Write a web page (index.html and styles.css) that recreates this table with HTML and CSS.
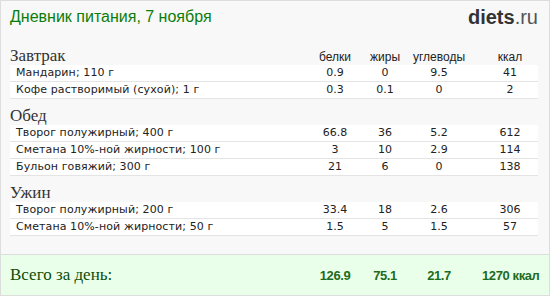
FILE: index.html
```html
<!DOCTYPE html>
<html lang="ru">
<head>
<meta charset="utf-8">
<title>Дневник питания</title>
<link rel="stylesheet" href="styles.css">
</head>
<body>
<div class="card">
  <header class="top">
    <h1 class="title">Дневник питания, 7 ноября</h1>
    <div class="logo"><b>diets</b>.ru</div>
  </header>
  <main class="diary">
    <div class="meal-head">
      <span class="meal">Завтрак</span>
      <span class="col">белки</span>
      <span class="col">жиры</span>
      <span class="col">углеводы</span>
      <span class="col kcal">ккал</span>
    </div>
    <div class="row"><span class="name">Мандарин; 110 г</span><span class="num">0.9</span><span class="num">0</span><span class="num">9.5</span><span class="num kcal">41</span></div>
    <div class="row"><span class="name">Кофе растворимый (сухой); 1 г</span><span class="num">0.3</span><span class="num">0.1</span><span class="num">0</span><span class="num kcal">2</span></div>

    <div class="meal-head"><span class="meal">Обед</span></div>
    <div class="row"><span class="name">Творог полужирный; 400 г</span><span class="num">66.8</span><span class="num">36</span><span class="num">5.2</span><span class="num kcal">612</span></div>
    <div class="row"><span class="name">Сметана 10%-ной жирности; 100 г</span><span class="num">3</span><span class="num">10</span><span class="num">2.9</span><span class="num kcal">114</span></div>
    <div class="row"><span class="name">Бульон говяжий; 300 г</span><span class="num">21</span><span class="num">6</span><span class="num">0</span><span class="num kcal">138</span></div>

    <div class="meal-head"><span class="meal">Ужин</span></div>
    <div class="row"><span class="name">Творог полужирный; 200 г</span><span class="num">33.4</span><span class="num">18</span><span class="num">2.6</span><span class="num kcal">306</span></div>
    <div class="row"><span class="name">Сметана 10%-ной жирности; 50 г</span><span class="num">1.5</span><span class="num">5</span><span class="num">1.5</span><span class="num kcal">57</span></div>
  </main>
  <footer class="total">
    <span class="total-label">Всего за день:</span>
    <span class="tnum">126.9</span>
    <span class="tnum">75.1</span>
    <span class="tnum">21.7</span>
    <span class="tnum kcal">1270 ккал</span>
  </footer>
</div>
</body>
</html>
```

FILE: styles.css
```css
* { box-sizing: border-box; }
html, body { margin: 0; padding: 0; background: #ffffff; }

.card {
  width: 550px;
  height: 296px;
  border: 1px solid #dddddd;
  background: #f8f8f8;
  display: flex;
  flex-direction: column;
  font-family: "DejaVu Sans", Verdana, sans-serif;
}

.top {
  height: 38px;
  padding: 5px 11px 0 9px;
  display: flex;
  justify-content: space-between;
  align-items: flex-start;
}

.title {
  margin: 0;
  font-family: "Liberation Sans", Arial, sans-serif;
  font-weight: normal;
  font-size: 16px;
  line-height: 22px;
  color: #0a7d0a;
}

.logo {
  font-family: "Liberation Sans", Arial, sans-serif;
  font-size: 20px;
  line-height: 22px;
  color: #555555;
}
.logo b { color: #333333; font-weight: bold; }

.diary {
  flex: 1;
  padding: 0 11px 0 9px;
}

.meal-head,
.row,
.total {
  display: grid;
  grid-template-columns: 1fr 50px 50px 58px 70px;
  align-items: center;
}

.meal-head {
  margin-top: 8px;
  height: 18px;
}

.meal {
  font-family: "Liberation Serif", "Times New Roman", serif;
  font-size: 17px;
  line-height: 18px;
  color: #333333;
}

.col {
  font-family: "Liberation Sans", Arial, sans-serif;
  font-size: 12px;
  color: #222222;
  text-align: center;
  align-self: end;
  line-height: 16px;
}

.kcal { padding-left: 14px; }

.row {
  height: 17px;
  background: #ffffff;
  border-bottom: 1px solid #e4e4e4;
  font-size: 11px;
  line-height: 16px;
  color: #222222;
}

.name { padding-left: 6px; white-space: nowrap; letter-spacing: 0.1px; }
.num { text-align: center; }

.total {
  height: 41px;
  border-top: 1px solid #dddddd;
  background: #eaffea;
  padding: 0 11px 0 9px;
}

.total-label {
  font-family: "Liberation Serif", "Times New Roman", serif;
  font-size: 17px;
  color: #0b4d0b;
}

.tnum {
  font-family: "Liberation Sans", Arial, sans-serif;
  font-weight: bold;
  font-size: 13px;
  letter-spacing: -0.4px;
  color: #1e6b1e;
  text-align: center;
  white-space: nowrap;
}
```
